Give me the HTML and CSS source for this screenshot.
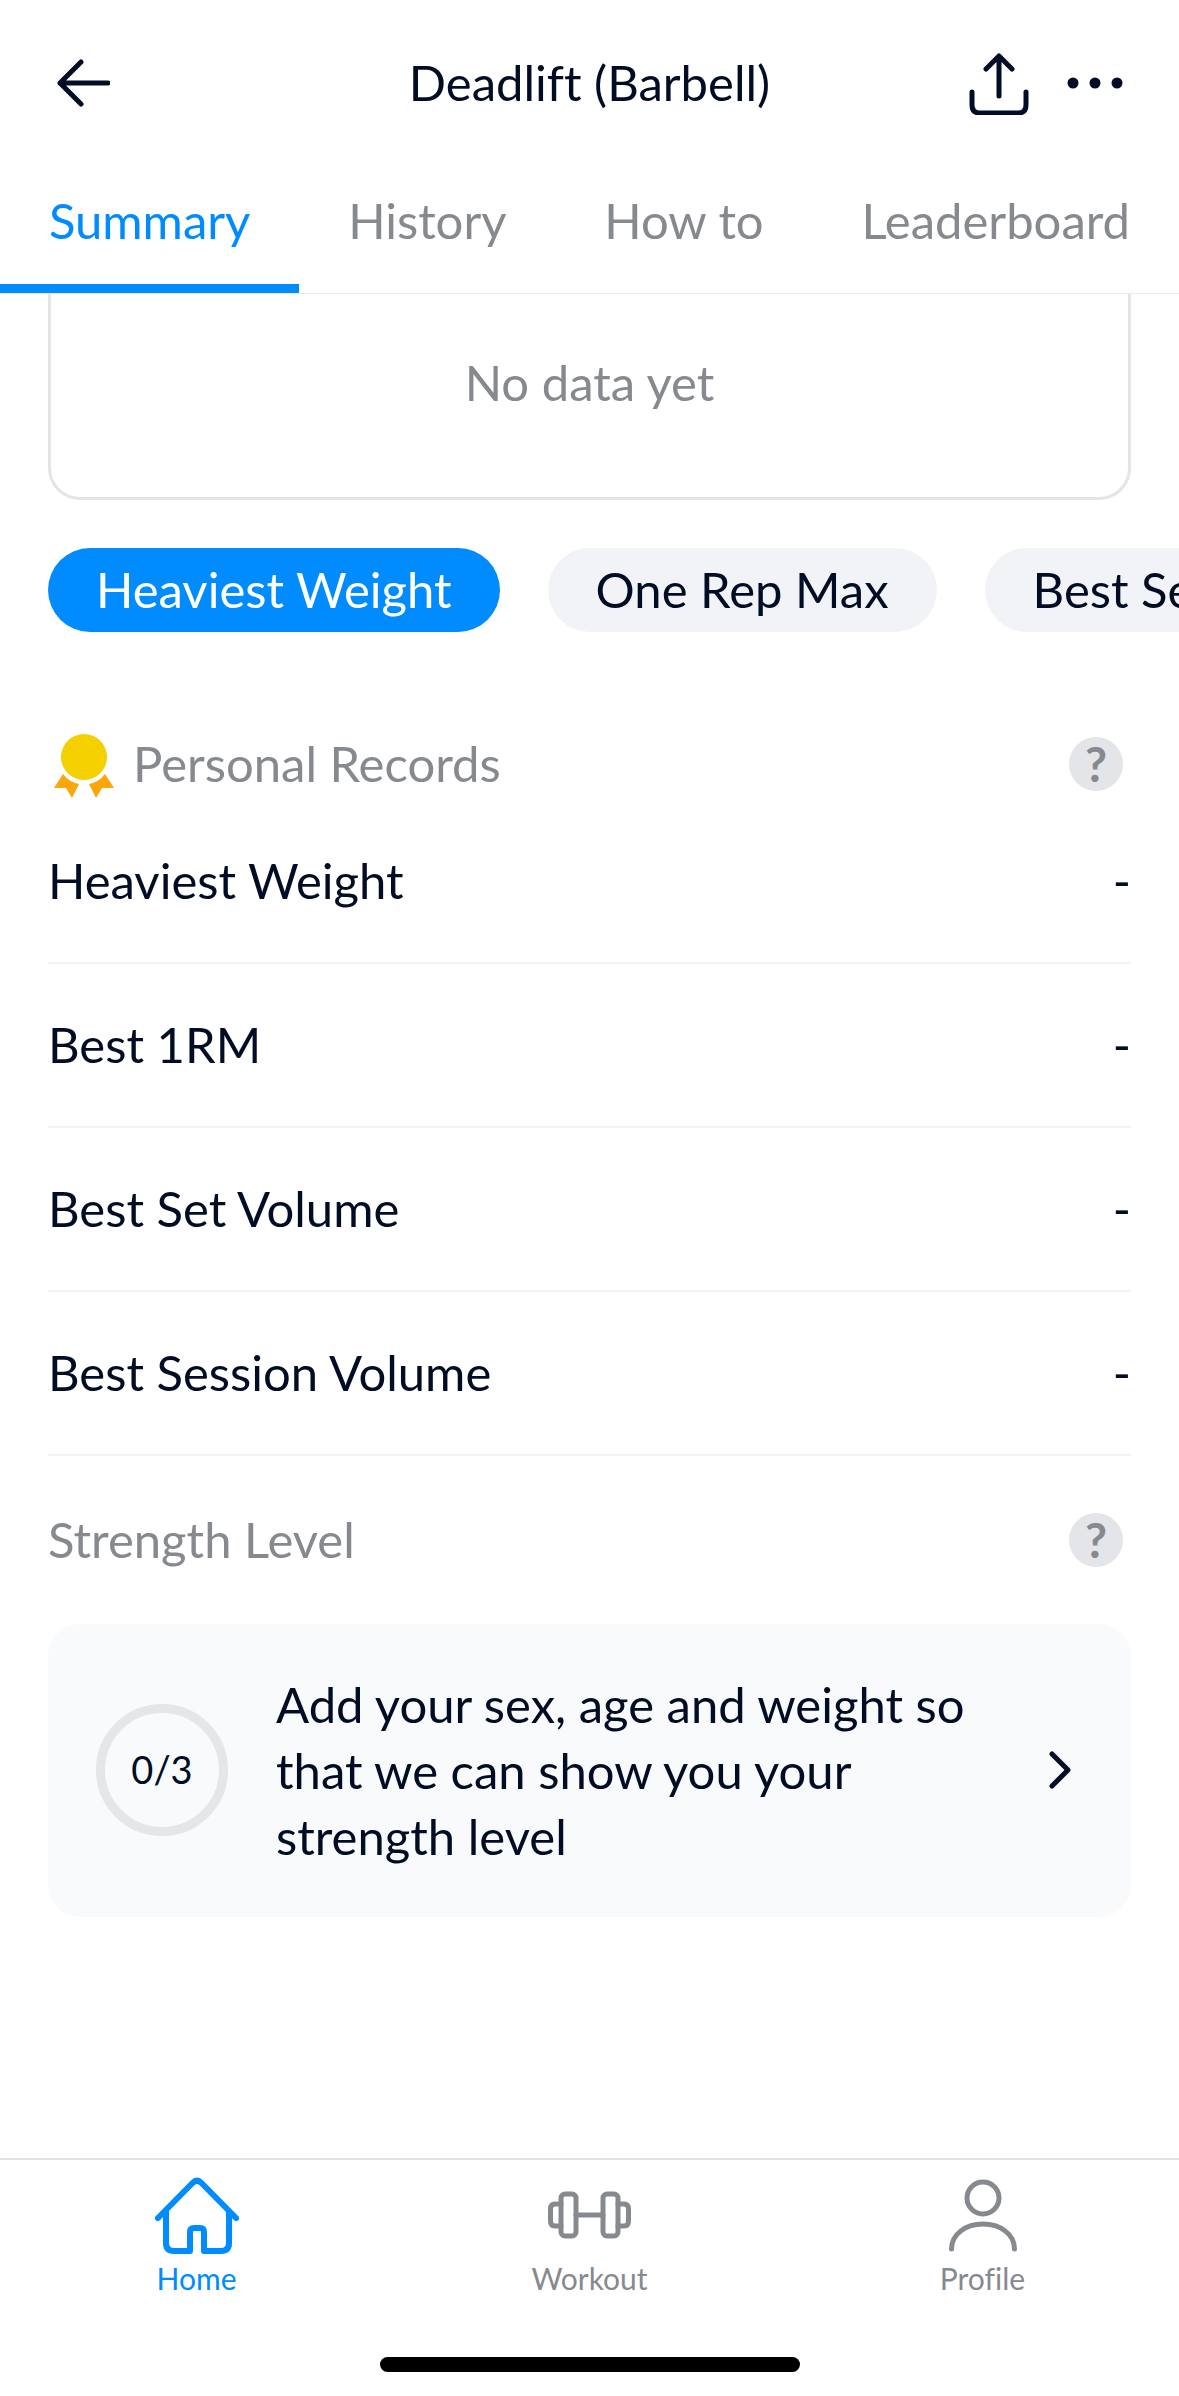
FILE: index.html
```html
<!DOCTYPE html>
<html lang="en">
<head>
    <meta charset="UTF-8">
    <meta name="viewport" content="width=device-width, initial-scale=1">
    <title>Deadlift (Barbell)</title>
    <link rel="stylesheet" href="styles.css">
</head>
<body>
<header class="top-bar">
    <div class="side">
        <button type="button" class="icon-btn" aria-label="Back">
            <svg width="54" height="60" viewBox="0 0 54 60"><path d="M25 9L4 30L25 51M4 30H52"/></svg>
        </button>
    </div>
    <h1>Deadlift (Barbell)</h1>
    <div class="side right">
        <button type="button" class="icon-btn" aria-label="Share">
            <svg width="60" height="64" viewBox="0 0 60 64"><path d="M30 45V6M17 18L30 5L43 18M3 41V54Q3 62 11 62H49Q57 62 57 54V41"/></svg>
        </button>
        <button type="button" class="icon-btn" aria-label="More">
            <svg class="dots" width="56" height="60" viewBox="0 0 56 60"><circle cx="6" cy="30" r="5.500"/><circle cx="28" cy="30" r="5.500"/><circle cx="50" cy="30" r="5.500"/></svg>
        </button>
    </div>
</header>
<nav class="tabs">
    <a href="#summary" class="active">Summary</a>
    <a href="#history">History</a>
    <a href="#howto">How to</a>
    <a href="#leaderboard">Leaderboard</a>
</nav>

<main id="summary">
    <div class="chart-empty">No data yet</div>
    <div class="chips">
        <button type="button" class="chip active">Heaviest Weight</button>
        <button type="button" class="chip">One Rep Max</button>
        <button type="button" class="chip">Best Set Volume</button>
    </div>

    <section>
        <div class="section-head">
            <svg class="medal" width="72" height="72" viewBox="0 0 72 72">
                <circle class="gold" cx="36" cy="29" r="23"/>
                <path class="ribbon" d="M15 46Q21 54 31 56L24 70L18 60H6ZM57 46Q51 54 41 56L48 70L54 60H66Z"/>
            </svg>
            <h2>Personal Records</h2>
            <button type="button" class="help" aria-label="About personal records">?</button>
        </div>
        <dl class="records">
            <div><dt>Heaviest Weight</dt><dd>-</dd></div>
            <div><dt>Best 1RM</dt><dd>-</dd></div>
            <div><dt>Best Set Volume</dt><dd>-</dd></div>
            <div><dt>Best Session Volume</dt><dd>-</dd></div>
        </dl>
    </section>

    <section>
        <div class="section-head">
            <h2>Strength Level</h2>
            <button type="button" class="help" aria-label="About strength level">?</button>
        </div>
        <a href="#strength" class="level-card">
            <span class="ring">0/3</span>
            <span class="level-text">Add your sex, age and weight so that we can show you your strength level</span>
            <svg width="24" height="40" viewBox="0 0 24 40"><path d="M5 4L21 20L5 36"/></svg>
        </a>
    </section>
</main>

<footer>
    <nav class="bottom-nav">
        <a href="#home" class="active">
            <svg width="84" height="84" viewBox="0 0 84 84"><path d="M3 42L37.500 7Q42 2.500 46.500 7L81 42M11 36V67Q11 75 19 75H35V56Q35 52 39 52H45Q49 52 49 56V75H66Q74 75 74 67V36"/></svg>
            Home
        </a>
        <a href="#workout">
            <svg class="thin" width="84" height="84" viewBox="0 0 84 84"><rect x="13" y="18" width="15" height="42" rx="4"/><rect x="55" y="18" width="15" height="42" rx="4"/><path d="M28 39H55M13 28H7Q2.500 28 2.500 33V45Q2.500 50 7 50H13M70 28H76Q80.500 28 80.500 33V45Q80.500 50 76 50H70"/></svg>
            Workout
        </a>
        <a href="#profile">
            <svg class="thin" width="84" height="84" viewBox="0 0 84 84"><circle cx="42" cy="22" r="16"/><path d="M10.500 73C10.500 58 25 48 42 48S73.500 58 73.500 73"/></svg>
            Profile
        </a>
    </nav>
    <div class="home-indicator"></div>
</footer>
</body>
</html>
```
FILE: styles.css
```css
*{box-sizing:border-box;}
body,h1,h2,dl,dt,dd{margin:0;padding:0;}
body{min-height:100vh;display:flex;flex-direction:column;background:#fff;color:#000d24;font:49px/66px Lato,"Noto Sans",sans-serif;font-variant-ligatures:none;overflow-x:hidden;}
h1,h2{font-size:49px;font-weight:400;line-height:64px;}
a{color:inherit;text-decoration:none;}
button{margin:0;padding:0;border:0;background:none;color:inherit;font:inherit;cursor:pointer;}
svg{display:block;flex:none;fill:none;stroke:currentColor;stroke-width:5;stroke-linecap:round;stroke-linejoin:round;}

/* top bar */
.top-bar{display:flex;align-items:center;padding:40px 56px;height:166px;}
.top-bar h1{white-space:nowrap;padding-bottom:2px;}
.side{flex:1;display:flex;align-items:center;}
.right{justify-content:flex-end;gap:38px;}
.dots{fill:currentColor;stroke:none;}

.tabs{display:flex;height:128px;border-bottom:1px solid #ebebeb;color:#868a8f;}
.tabs a{flex:auto;padding-top:21px;text-align:center;border-bottom:9px solid transparent;white-space:nowrap;}
.tabs .active{color:#008cff;border-color:#008cff;}

main{flex:1;padding:0 48px;}
.chart-empty{padding:55px 0 82px;border:3px solid #e5e5e6;border-top:0;border-radius:0 0 32px 32px;text-align:center;color:#868a8f;}

.chips{display:flex;gap:48px;margin:48px -48px 0 0;overflow:hidden;}
.chip{flex:none;height:84px;padding:0 48px 2px;border-radius:42px;background:#f1f3f6;}
.chip.active{background:#008cff;color:#fff;}

.section-head{display:flex;align-items:center;padding-right:8px;color:#868a8f;}
.section-head h2{padding-bottom:2px;}
.chips + section{margin-top:96px;}
.medal{margin-right:13px;stroke:none;}
.gold{fill:#f5d000;}
.ribbon{fill:#fca60a;}
.help{width:54px;height:54px;margin-left:auto;border-radius:50%;background:#e4e5e8;font-size:48px;font-weight:700;line-height:54px;}

.records div{display:flex;justify-content:space-between;height:164px;padding-top:47px;border-bottom:2px solid #f3f3f4;}
section + section{margin-top:51px;}

.level-card{display:flex;align-items:center;margin-top:51px;padding:47px 48px 48px;border-radius:32px;background:#f9fafc;}
.ring{flex:none;width:132px;height:132px;border:9px solid #e5e6e8;border-radius:50%;font-size:38px;line-height:112px;text-align:center;}
.level-text{flex:1;margin:0 64px 0 48px;}
.level-card svg{margin-right:12px;}

/* bottom bar */
.bottom-nav{display:grid;grid-template-columns:1fr 1fr 1fr;border-top:2px solid #e0e0e0;padding-top:16px;}
.bottom-nav a{display:flex;flex-direction:column;align-items:center;color:#868a8f;font-size:30px;line-height:36px;}
.bottom-nav .active{color:#008cff;}
.bottom-nav svg{stroke-width:6;}
.bottom-nav .thin{stroke-width:5;}
.home-indicator{width:420px;height:15px;margin:61px auto 24px;border-radius:8px;background:#000;}
```
